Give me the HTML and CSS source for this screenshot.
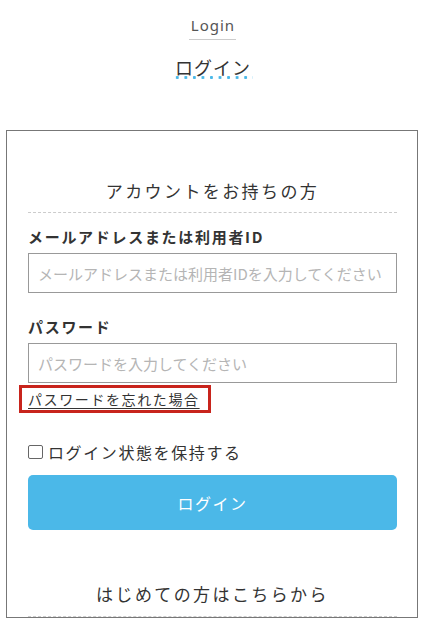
FILE: index.html
```html
<!DOCTYPE html>
<html lang="ja">
<head>
<meta charset="utf-8">
<title>ログイン</title>
<link rel="stylesheet" href="styles.css">
</head>
<body>
<header class="page-head">
  <div class="en-title"><span>Login</span></div>
  <h1 class="ja-title"><span>ログイン</span></h1>
</header>
<section class="login-box">
  <h2 class="box-title">アカウントをお持ちの方</h2>
  <form class="login-form">
    <label class="field-label" for="uid">メールアドレスまたは利用者ID</label>
    <input class="field-input" id="uid" type="text" placeholder="メールアドレスまたは利用者IDを入力してください">
    <label class="field-label pass-label" for="pw">パスワード</label>
    <input class="field-input" id="pw" type="password" placeholder="パスワードを入力してください">
    <div class="forgot-row"><span class="forgot-mark"><a class="forgot-link" href="#">パスワードを忘れた場合</a></span></div>
    <label class="keep-row"><input class="keep-check" type="checkbox"><span>ログイン状態を保持する</span></label>
    <button class="login-btn" type="button">ログイン</button>
  </form>
  <h2 class="box-title new-title">はじめての方はこちらから</h2>
</section>
</body>
</html>
```
FILE: styles.css
```css
* { box-sizing: border-box; }
html, body { margin: 0; padding: 0; background: #fff; }
body {
  font-family: "Noto Sans CJK JP", "Noto Sans", sans-serif;
  color: #333;
  height: 619px;
  overflow: hidden;
}
.page-head { padding-top: 15px; display: flex; flex-direction: column; align-items: center; }
.en-title { margin: 0; display: flex; justify-content: center; }
.en-title span {
  display: block;
  font-family: "Noto Sans", sans-serif;
  font-size: 15px;
  line-height: 20px;
  letter-spacing: 1px;
  color: #555;
  padding: 0 1px 4px 2px;
  border-bottom: 1px solid #ccc;
}
.ja-title {
  margin: 15px 0 0;
  display: flex;
  justify-content: center;
  font-size: 18px;
  font-weight: 400;
  line-height: 24px;
}
.ja-title span {
  display: block;
  position: relative;
  letter-spacing: 1px;
  padding: 0 1px 0 2px;
  color: #333;
}
.ja-title span::after {
  content: "";
  position: absolute;
  left: 0;
  bottom: 0;
  width: 80px;
  height: 3px;
  background: radial-gradient(circle, #4ab8e8 1.3px, transparent 1.7px) 0 0 / 8.55px 3px repeat-x;
}
.login-box {
  margin: 51px 7px 0 6px;
  border: 1px solid #777;
  padding: 48px 20px 0 21px;
}
.box-title {
  margin: 0;
  font-size: 17px;
  font-weight: 400;
  line-height: 24px;
  letter-spacing: 2.4px;
  text-align: center;
  padding-bottom: 9px;
  border-bottom: 1px dashed #ccc;
  color: #333;
}
.login-form { display: flex; flex-direction: column; align-items: stretch; }
.field-label {
  margin-top: 13px;
  font-size: 15px;
  font-weight: 700;
  line-height: 22px;
  letter-spacing: 1.7px;
  color: #333;
}
.pass-label { margin-top: 23px; }
.field-input {
  margin-top: 5px;
  height: 40px;
  border: 1px solid #999;
  border-radius: 0;
  padding: 0 8px 0 9px;
  font-family: "Noto Sans CJK JP", sans-serif;
  font-size: 15px;
  letter-spacing: 0;
  color: #333;
  outline: none;
}
.field-input::placeholder { color: #b5b5b5; }
.forgot-row { margin-top: 2px; display: flex; }
.forgot-mark {
  display: block;
  margin-left: -9px;
  border: 3px solid #c8241c;
  padding: 0 8px 0 6px;
  line-height: 21px;
}
.forgot-link {
  font-size: 14px;
  letter-spacing: 1.6px;
  color: #333;
  text-decoration: underline;
  text-underline-offset: 3px;
}
.keep-row {
  margin-top: 27px;
  display: flex;
  align-items: center;
  gap: 5px;
  font-size: 16px;
  line-height: 24px;
  letter-spacing: 1.6px;
  color: #333;
}
.keep-check {
  appearance: none;
  -webkit-appearance: none;
  width: 15px;
  height: 14px;
  margin: 0;
  border: 1px solid #666;
  border-radius: 2px;
  background: #fff;
}
.login-btn {
  margin-top: 11px;
  height: 55px;
  border: none;
  border-radius: 5px;
  background: #4bb8e8;
  color: #fff;
  font-family: "Noto Sans CJK JP", sans-serif;
  font-size: 16px;
  letter-spacing: 1.5px;
}
.new-title { margin-top: 52px; padding-bottom: 10px; }
```
